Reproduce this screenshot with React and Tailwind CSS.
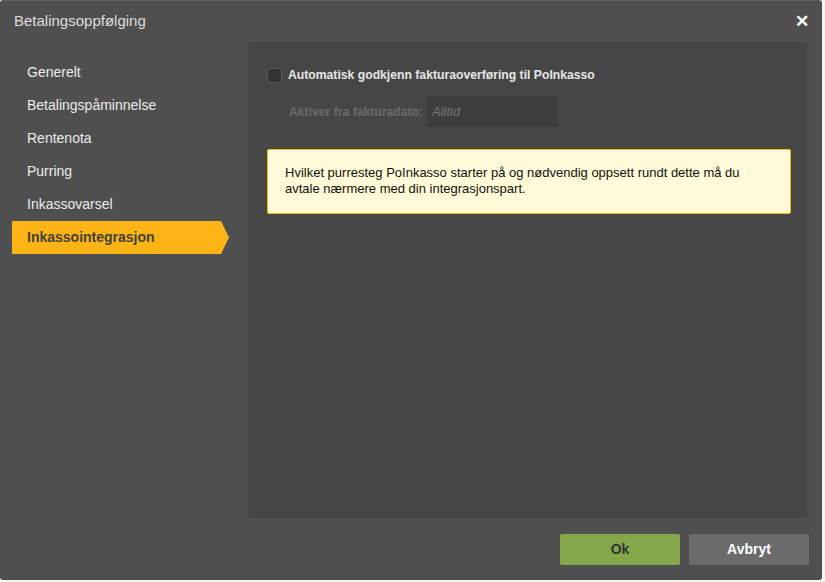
import React, { useState } from 'react';

const menu = ['Generelt', 'Betalingspåminnelse', 'Rentenota', 'Purring', 'Inkassovarsel', 'Inkassointegrasjon'];

export default function App() {
  const [active, setActive] = useState('Inkassointegrasjon');
  const [auto, setAuto] = useState(false);

  return (
    <div className="w-[825px] h-[582px] bg-[#f4f4f4] font-['Liberation_Sans',Arial,sans-serif]">
      <div className="w-[822px] h-[580px] bg-[#4f4f4f] rounded-[3px] border-t border-[#5e5e5e] flex flex-col">
        {/* Title bar */}
        <div className="h-[41px] flex items-center justify-between pl-[14px] pr-[13px]">
          <span className="text-[15px] text-[#dedede]">Betalingsoppfølging</span>
          <button className="text-white text-[17px] font-bold leading-none">✕</button>
        </div>

        <div className="flex flex-1">
          {/* Sidebar */}
          <div className="w-[248px] pl-[12px] pt-[14px] flex flex-col">
            {menu.map(m => (
              m === active ? (
                <div key={m} className="relative w-[218px] h-[33px] flex items-center">
                  <svg className="absolute inset-0" width="218" height="33" viewBox="0 0 218 33">
                    <path d="M1 0 H209 L217 16.5 L209 33 H1 Q0 33 0 32 V1 Q0 0 1 0 Z" fill="#fdb414" />
                  </svg>
                  <span className="relative pl-[15px] text-[14px] font-bold text-[#414141]">{m}</span>
                </div>
              ) : (
                <button
                  key={m}
                  onClick={() => setActive(m)}
                  className="h-[33px] flex items-center pl-[15px] text-[14px] text-[#ececec] text-left"
                >
                  {m}
                </button>
              )
            ))}
          </div>

          {/* Content */}
          <div className="flex-1 flex flex-col pr-[15px]">
            <div className="flex-1 bg-[#464646] rounded-[2px] pl-[19px] pr-[16px] pt-[24px]">
              <label className="flex items-center gap-[6px] cursor-pointer whitespace-nowrap">
                <input
                  type="checkbox"
                  checked={auto}
                  onChange={e => setAuto(e.target.checked)}
                  className="appearance-none shrink-0 w-[15px] h-[15px] rounded-[3px] bg-[#333333] border border-[#5a5a5a]"
                />
                <span className="text-[12.2px] font-bold text-[#e6e6e6]">Automatisk godkjenn fakturaoverføring til PoInkasso</span>
              </label>

              <div className="flex items-center mt-[12px] pl-[22px]">
                <span className="text-[12.2px] font-bold text-[#6a6a6a] w-[138px] shrink-0 whitespace-nowrap">Aktiver fra fakturadato:</span>
                <input
                  disabled
                  placeholder="Alltid"
                  className="w-[131px] h-[31px] bg-[#3d3d3d] rounded-[2px] px-[5px] text-[13px] italic placeholder:text-[#777777]"
                />
              </div>

              <div className="mt-[22px] h-[65px] bg-[#fffbd8] border border-[#e6c40c] rounded-[2px] pl-[17px] pt-[15px] text-[13px] leading-[16px] text-[#111111]">
                Hvilket purresteg PoInkasso starter på og nødvendig oppsett rundt dette må du<br />
                avtale nærmere med din integrasjonspart.
              </div>
            </div>

            {/* Footer */}
            <div className="h-[62px] flex items-center justify-end gap-[9px] mr-[-2px]">
              <button className="w-[120px] h-[31px] bg-[#85a74a] rounded-[2px] text-[14px] font-bold text-[#333333]">Ok</button>
              <button className="w-[120px] h-[31px] bg-[#6b6b6b] rounded-[2px] text-[14px] font-bold text-white">Avbryt</button>
            </div>
          </div>
        </div>
      </div>
    </div>
  );
}
